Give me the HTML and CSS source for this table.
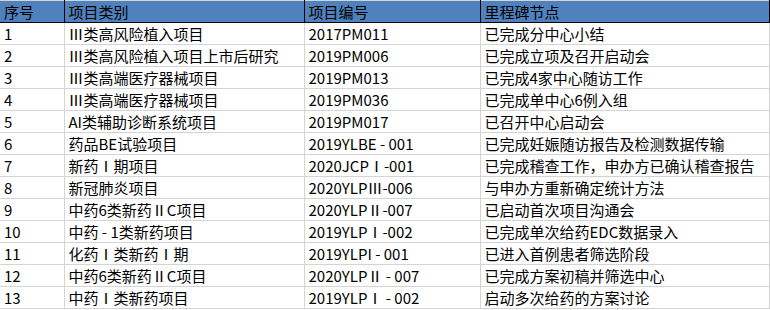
FILE: index.html
```html
<!DOCTYPE html>
<html lang="zh">
<head>
<meta charset="utf-8">
<link rel="stylesheet" href="styles.css">
</head>
<body>
<table class="grid">
<colgroup><col class="c1"><col class="c2"><col class="c3"><col class="c4"></colgroup>
<thead>
<tr><th>序号</th><th>项目类别</th><th>项目编号</th><th>里程碑节点</th></tr>
</thead>
<tbody>
<tr><td>1</td><td>Ⅲ类高风险植入项目</td><td>2017PM011</td><td>已完成分中心小结</td></tr>
<tr><td>2</td><td>Ⅲ类高风险植入项目上市后研究</td><td>2019PM006</td><td>已完成立项及召开启动会</td></tr>
<tr><td>3</td><td>Ⅲ类高端医疗器械项目</td><td>2019PM013</td><td>已完成4家中心随访工作</td></tr>
<tr><td>4</td><td>Ⅲ类高端医疗器械项目</td><td>2019PM036</td><td>已完成单中心6例入组</td></tr>
<tr><td>5</td><td>AI类辅助诊断系统项目</td><td>2019PM017</td><td>已召开中心启动会</td></tr>
<tr><td>6</td><td>药品BE试验项目</td><td>2019YLBE - 001</td><td>已完成妊娠随访报告及检测数据传输</td></tr>
<tr><td>7</td><td>新药Ⅰ期项目</td><td>2020JCPⅠ-001</td><td>已完成稽查工作，申办方已确认稽查报告</td></tr>
<tr><td>8</td><td>新冠肺炎项目</td><td>2020YLPⅢ-006</td><td>与申办方重新确定统计方法</td></tr>
<tr><td>9</td><td>中药6类新药ⅡC项目</td><td>2020YLPⅡ-007</td><td>已启动首次项目沟通会</td></tr>
<tr><td>10</td><td>中药 - 1类新药项目</td><td>2019YLPⅠ-002</td><td>已完成单次给药EDC数据录入</td></tr>
<tr><td>11</td><td>化药Ⅰ类新药Ⅰ期</td><td>2019YLPI - 001</td><td>已进入首例患者筛选阶段</td></tr>
<tr><td>12</td><td>中药6类新药ⅡC项目</td><td>2020YLPⅡ - 007</td><td>已完成方案初稿并筛选中心</td></tr>
<tr><td>13</td><td>中药Ⅰ类新药项目</td><td>2019YLPⅠ - 002</td><td>启动多次给药的方案讨论</td></tr>
</tbody>
</table>
</body>
</html>
```
FILE: styles.css
```css
html, body {
  margin: 0;
  padding: 0;
  background: #ffffff;
}
body {
  font-family: "Noto Sans CJK SC", "Microsoft YaHei", sans-serif;
  font-size: 15px;
  color: #000000;
}
.grid {
  border-collapse: collapse;
  table-layout: fixed;
  width: 769px;
}
.c1 { width: 64px; }
.c2 { width: 240px; }
.c3 { width: 176px; }
.c4 { width: 289px; }
.grid th, .grid td {
  height: 22px;
  padding: 0 0 0 4px;
  text-align: left;
  font-weight: normal;
  white-space: nowrap;
  overflow: hidden;
  line-height: 20px;
  box-sizing: border-box;
}
.grid th {
  background: #4f81bd;
  border-top: 1px solid #d4d4d4;
  border-left: 1px solid #000000;
  border-right: 1px solid #000000;
  border-bottom: 1px solid #000000;
}
.grid th:first-child { border-left: none; }
.grid td {
  border: 1px solid #d4d4d4;
}
.grid td:first-child { border-left: none; }
```
